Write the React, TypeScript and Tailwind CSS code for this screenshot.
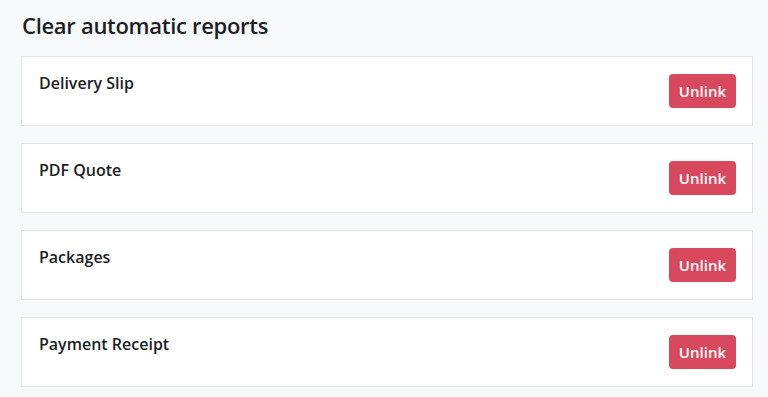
const reports = ['Delivery Slip', 'PDF Quote', 'Packages', 'Payment Receipt'];

export default function App() {
  return (
    <div className="min-h-screen w-full bg-[#f8f9fa] pl-[21px] pr-[15px] pt-[10px] font-['Open_Sans',sans-serif] text-[#1b1e24]">
      <h1 className="text-[22px] leading-[30px] font-semibold tracking-[-0.3px] mb-[16px] ml-px">Clear automatic reports</h1>
      <div className="flex flex-col gap-[17px]">
        {reports.map((name) => (
          <div
            key={name}
            className="flex items-start justify-between bg-white border border-[#e4e5e7] pl-[17px] pr-[16px] py-[17px]"
          >
            <div className="text-[16px] leading-[20px] font-semibold -mt-px">{name}</div>
            <button className="h-[34px] px-[10px] rounded-[4px] bg-[#d9495d] text-white text-[15px] font-semibold">
              Unlink
            </button>
          </div>
        ))}
      </div>
    </div>
  );
}
